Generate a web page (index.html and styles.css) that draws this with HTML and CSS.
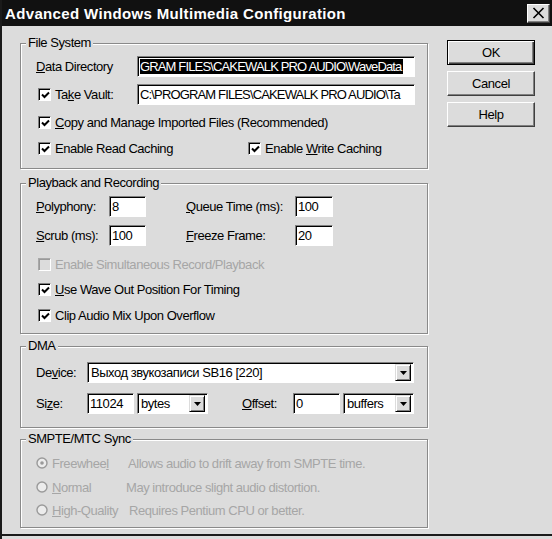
FILE: index.html
```html
<!DOCTYPE html>
<html>
<head>
<meta charset="utf-8">
<link rel="stylesheet" href="styles.css">
</head>
<body>
<div class="window">
  <div class="titlebar">
    <span class="title">Advanced Windows Multimedia Configuration</span>
    <span class="close"><svg width="13" height="12" viewBox="0 0 13 12"><path d="M1.5 1 L11.5 11 M11.5 1 L1.5 11" stroke="#000" stroke-width="1.6" fill="none"/></svg></span>
  </div>
  <div class="main">
    <div class="groups">
      <div class="group g-fs">
        <span class="legend">File System</span>
        <div class="row fs-r1">
          <span class="lbl w-dd"><u>D</u>ata Directory</span>
          <span class="field f-path"><span class="sel">GRAM FILES\CAKEWALK PRO AUDIO\WaveData</span></span>
        </div>
        <div class="row fs-r2">
          <span class="chk-wrap w-tv"><span class="chk on"><svg width="9" height="8" viewBox="0 0 9 8"><path d="M1 3.5 L3.5 6 L8 1.5" stroke="#000" stroke-width="2" fill="none"/></svg></span><span class="txt">Ta<u>k</u>e Vault:</span></span>
          <span class="field f-path"><span class="val">C:\PROGRAM FILES\CAKEWALK PRO AUDIO\Ta</span></span>
        </div>
        <div class="row fs-r3">
          <span class="chk-wrap"><span class="chk on"><svg width="9" height="8" viewBox="0 0 9 8"><path d="M1 3.5 L3.5 6 L8 1.5" stroke="#000" stroke-width="2" fill="none"/></svg></span><span class="txt"><u>C</u>opy and Manage Imported Files (Recommended)</span></span>
        </div>
        <div class="row fs-r4">
          <span class="chk-wrap w-rc"><span class="chk on"><svg width="9" height="8" viewBox="0 0 9 8"><path d="M1 3.5 L3.5 6 L8 1.5" stroke="#000" stroke-width="2" fill="none"/></svg></span><span class="txt">Enable Read Caching</span></span>
          <span class="chk-wrap"><span class="chk on"><svg width="9" height="8" viewBox="0 0 9 8"><path d="M1 3.5 L3.5 6 L8 1.5" stroke="#000" stroke-width="2" fill="none"/></svg></span><span class="txt">Enable <u>W</u>rite Caching</span></span>
        </div>
      </div>

      <div class="group g-pb">
        <span class="legend">Playback and Recording</span>
        <div class="row pb-grid pb-r1">
          <span class="lbl"><u>P</u>olyphony:</span>
          <span class="field"><span class="val">8</span></span>
          <span></span>
          <span class="lbl"><u>Q</u>ueue Time (ms):</span>
          <span class="field"><span class="val">100</span></span>
        </div>
        <div class="row pb-grid pb-r2">
          <span class="lbl"><u>S</u>crub (ms):</span>
          <span class="field"><span class="val">100</span></span>
          <span></span>
          <span class="lbl"><u>F</u>reeze Frame:</span>
          <span class="field"><span class="val">20</span></span>
        </div>
        <div class="row pb-r3">
          <span class="chk-wrap disabled"><span class="chk"></span><span class="txt">Enable Simultaneous Record/Playback</span></span>
        </div>
        <div class="row pb-r4">
          <span class="chk-wrap"><span class="chk on"><svg width="9" height="8" viewBox="0 0 9 8"><path d="M1 3.5 L3.5 6 L8 1.5" stroke="#000" stroke-width="2" fill="none"/></svg></span><span class="txt"><u>U</u>se Wave Out Position For Timing</span></span>
        </div>
        <div class="row pb-r5">
          <span class="chk-wrap"><span class="chk on"><svg width="9" height="8" viewBox="0 0 9 8"><path d="M1 3.5 L3.5 6 L8 1.5" stroke="#000" stroke-width="2" fill="none"/></svg></span><span class="txt">Clip Audio Mix Upon Overflow</span></span>
        </div>
      </div>

      <div class="group g-dma">
        <span class="legend">DMA</span>
        <div class="row dma-r1">
          <span class="lbl">De<u>v</u>ice:</span>
          <span class="combo c-dev"><span class="val">Выход звукозаписи SB16 [220]</span><span class="arrow"><svg width="7" height="4" viewBox="0 0 7 4"><path d="M0 0 H7 L3.5 4 Z" fill="#000"/></svg></span></span>
        </div>
        <div class="row dma-r2">
          <span class="lbl">Si<u>z</u>e:</span>
          <span class="field"><span class="val">11024</span></span>
          <span class="combo"><span class="val">bytes</span><span class="arrow"><svg width="7" height="4" viewBox="0 0 7 4"><path d="M0 0 H7 L3.5 4 Z" fill="#000"/></svg></span></span>
          <span></span>
          <span class="lbl"><u>O</u>ffset:</span>
          <span class="field"><span class="val">0</span></span>
          <span class="combo"><span class="val">buffers</span><span class="arrow"><svg width="7" height="4" viewBox="0 0 7 4"><path d="M0 0 H7 L3.5 4 Z" fill="#000"/></svg></span></span>
        </div>
      </div>

      <div class="group g-smpte disabled">
        <span class="legend dark">SMPTE/MTC Sync</span>
        <div class="radio-row">
          <span class="radio"><svg width="12" height="12" viewBox="0 0 12 12"><circle cx="6" cy="6" r="5" fill="#ececec" stroke="#9a9a9a" stroke-width="1.4"/><circle cx="6" cy="6" r="1.8" fill="#9a9a9a"/></svg></span>
          <span class="rlbl">Freewhee<u>l</u></span>
          <span class="desc d1">Allows audio to drift away from SMPTE time.</span>
        </div>
        <div class="radio-row">
          <span class="radio"><svg width="12" height="12" viewBox="0 0 12 12"><circle cx="6" cy="6" r="5" fill="#ececec" stroke="#9a9a9a" stroke-width="1.4"/></svg></span>
          <span class="rlbl"><u>N</u>ormal</span>
          <span class="desc d2">May introduce slight audio distortion.</span>
        </div>
        <div class="radio-row">
          <span class="radio"><svg width="12" height="12" viewBox="0 0 12 12"><circle cx="6" cy="6" r="5" fill="#ececec" stroke="#9a9a9a" stroke-width="1.4"/></svg></span>
          <span class="rlbl"><u>H</u>igh-Quality</span>
          <span class="desc d3">Requires Pentium CPU or better.</span>
        </div>
      </div>
    </div>

    <div class="buttons">
      <span class="btn default">OK</span>
      <span class="btn">Cancel</span>
      <span class="btn">Help</span>
    </div>
  </div>
</div>
</body>
</html>
```

FILE: styles.css
```css
* { box-sizing: border-box; }
html, body { margin: 0; padding: 0; background: #dcdcdc; }
body {
  font-family: "Liberation Sans", Arial, sans-serif;
  font-size: 13px;
  letter-spacing: -0.45px;
  color: #000;
}
.window {
  width: 552px;
  height: 539px;
  background: #dcdcdc;
  border-left: 2px solid #1a1a1a;
  overflow: hidden;
  position: relative;
}
.titlebar {
  height: 26px;
  background: #111;
  margin-left: -2px;
  display: flex;
  align-items: center;
  justify-content: space-between;
  padding: 0 2px 0 5px;
}
.title {
  color: #fff;
  font-weight: bold;
  font-size: 15px;
  letter-spacing: 0.35px;
}
.close {
  width: 23px;
  height: 19px;
  background: #dcdcdc;
  border: 1px solid;
  border-color: #fff #404040 #404040 #fff;
  box-shadow: inset -1px -1px #808080;
  display: flex;
  align-items: center;
  justify-content: center;
}
.main {
  display: flex;
  padding-left: 18px;
  height: 510px;
  border-bottom: 2px solid #1a1a1a;
}
.groups {
  width: 408px;
  padding-top: 17px;
}
.group {
  position: relative;
  border: 1px solid #8a8a8a;
  box-shadow: inset 1px 1px #fff, 1px 1px #fff;
  padding: 0 0 0 15px;
}
.legend {
  position: absolute;
  left: 5px;
  top: -8px;
  line-height: 14px;
  padding: 0 2px;
  background: #dcdcdc;
}
.g-fs { height: 126px; padding-top: 12px; }
.g-pb { height: 151px; margin-top: 14px; padding-top: 12px; }
.g-dma { height: 82px; margin-top: 12px; padding-top: 15px; }
.g-smpte { height: 89px; margin-top: 11px; padding-top: 13px; }

.row { display: flex; align-items: center; }
.lbl { white-space: nowrap; }
u { text-decoration: underline; text-underline-offset: 1px; }

.field {
  display: block;
  height: 21px;
  background: #fff;
  border: 1px solid;
  border-color: #808080 #fff #fff #808080;
  box-shadow: inset 1px 1px #000;
  padding: 1px 0 0 3px;
  overflow: hidden;
  white-space: nowrap;
  line-height: 17px;
}
.val { white-space: nowrap; }

/* File system */
.fs-r1 { height: 21px; }
.fs-r2 { height: 21px; margin-top: 7px; }
.fs-r3 { height: 24px; margin-top: 5px; }
.fs-r4 { height: 24px; margin-top: 2px; }
.w-dd { width: 101px; }
.w-tv { width: 101px; }
.w-rc { width: 210px; }
.f-path { width: 278px; padding-left: 2px; letter-spacing: -0.85px; }
.sel {
  display: inline-block;
  background: #000;
  color: #fff;
  line-height: 15px;
  margin-top: 1px;
  padding-right: 2px;
}

.chk-wrap { display: flex; align-items: center; white-space: nowrap; padding-left: 2px; }
.chk {
  width: 13px;
  height: 13px;
  flex: none;
  background: #fff;
  border: 1px solid;
  border-color: #808080 #fff #fff #808080;
  box-shadow: inset 1px 1px #000;
  display: flex;
  align-items: center;
  justify-content: center;
  padding: 1px 0 0 1px;
  margin-right: 4px;
}
.chk-wrap.disabled .chk { background: #dcdcdc; box-shadow: inset 1px 1px #9a9a9a; border-color: #a8a8a8 #fff #fff #a8a8a8; }
.chk-wrap.disabled .txt { color: #a6a6a6; }

/* Playback */
.pb-grid { display: grid; grid-template-columns: 73px 37px 40px 109px 38px; align-items: center; }
.pb-r1 { height: 21px; }
.pb-r2 { height: 21px; margin-top: 8px; }
.pb-r3 { height: 24px; margin-top: 6px; }
.pb-r4 { height: 24px; margin-top: 1px; }
.pb-r5 { height: 24px; margin-top: 2px; }
.pb-grid .field { padding-left: 2px; }

/* DMA */
.dma-r1 { height: 21px; display: grid; grid-template-columns: 51px 327px; align-items: center; }
.dma-r2 { height: 21px; margin-top: 10px; display: grid; grid-template-columns: 51px 47px 74px 34px 51px 47px 74px; align-items: center; }
.dma-r2 .combo { margin-left: 3px; width: 71px; }
.dma-r2 .field { padding-left: 2px; }
.combo {
  height: 21px;
  background: #fff;
  border: 1px solid;
  border-color: #808080 #fff #fff #808080;
  box-shadow: inset 1px 1px #000;
  display: flex;
  align-items: center;
  justify-content: space-between;
  padding: 2px 2px 2px 3px;
  white-space: nowrap;
  overflow: hidden;
}
.arrow {
  width: 16px;
  height: 17px;
  flex: none;
  background: #dcdcdc;
  border: 1px solid;
  border-color: #dcdcdc #000 #000 #dcdcdc;
  box-shadow: inset 1px 1px #fff, inset -1px -1px #808080;
  display: flex;
  align-items: center;
  justify-content: center;
}

/* SMPTE */
.radio-row { display: flex; align-items: center; height: 20px; color: #a6a6a6; white-space: nowrap; }
.radio-row + .radio-row { margin-top: 4px; }
.radio-row:last-child { margin-top: 3px; }
.radio { width: 12px; height: 12px; display: flex; margin-right: 4px; }
.radio svg { display: block; }
.rlbl { width: 76px; }
.d2 { margin-left: -2px; }
.d3 { margin-left: 1px; }

/* Buttons */
.buttons {
  margin-left: 19px;
  padding-top: 14px;
  display: flex;
  flex-direction: column;
  gap: 6px;
}
.btn {
  width: 88px;
  height: 25px;
  display: flex;
  align-items: center;
  justify-content: center;
  background: #dcdcdc;
  border: 1px solid;
  border-color: #fff #404040 #404040 #fff;
  box-shadow: inset -1px -1px #808080;
}
.btn.default {
  border: 1px solid #000;
  box-shadow: inset 1px 1px #fff, inset -1px -1px #404040, inset -2px -2px #808080;
}
```
